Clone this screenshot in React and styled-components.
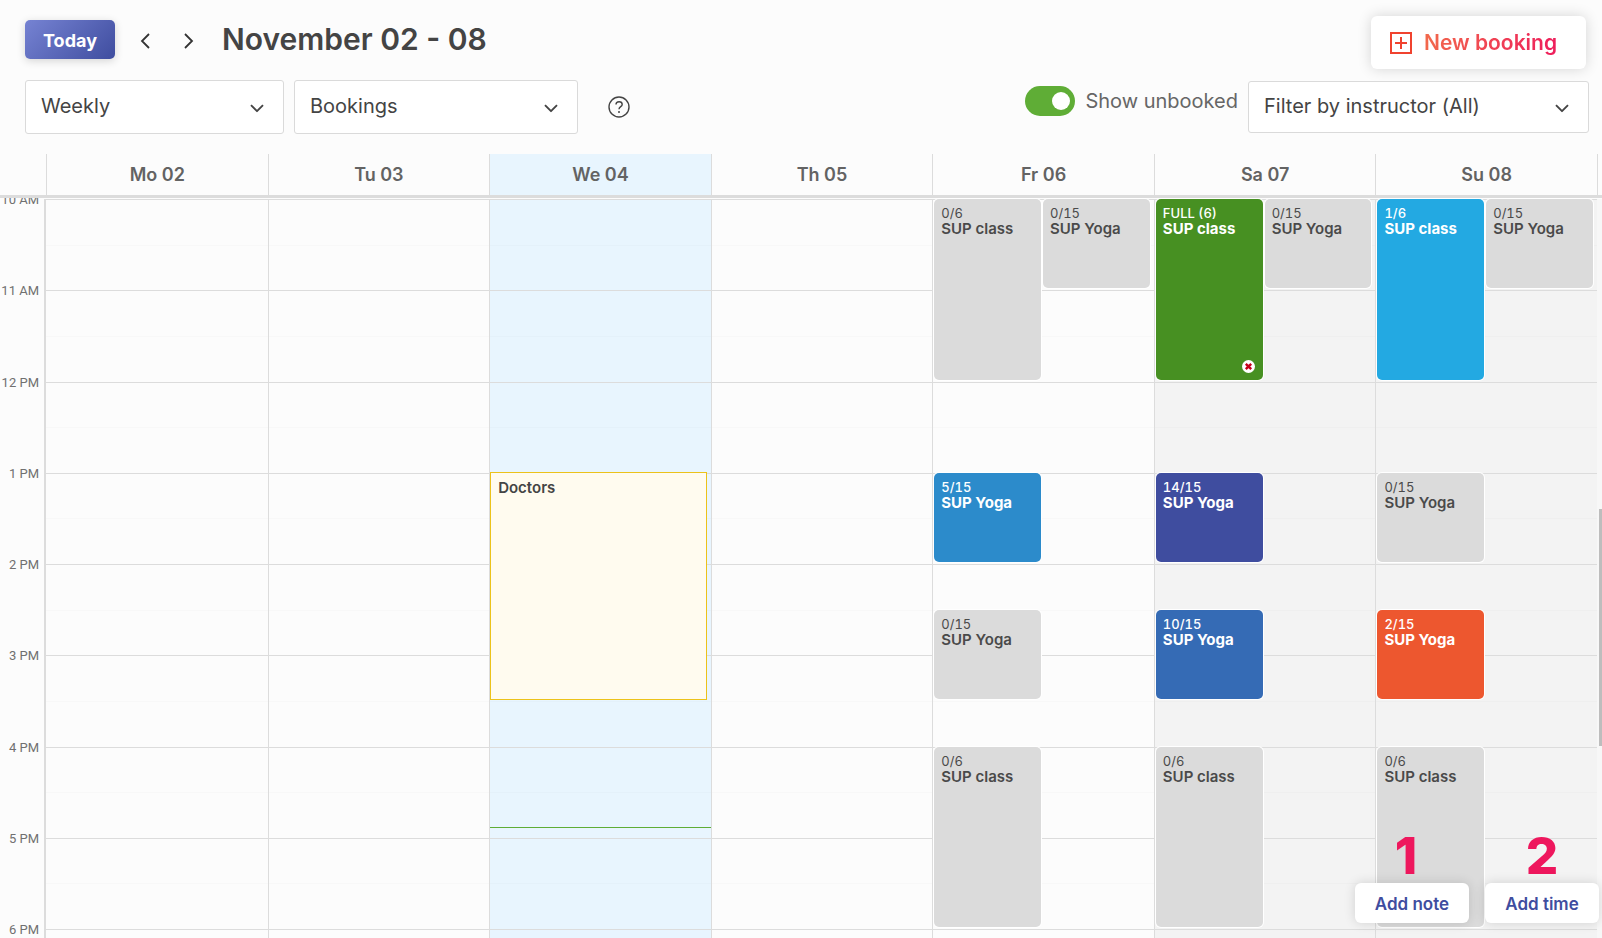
import React, { useState } from "react";
import styled, { createGlobalStyle, css } from "styled-components";

const GlobalStyle = createGlobalStyle`
  *, *::before, *::after { box-sizing: border-box; }
  body {
    margin: 0;
    background: #fcfcfc;
    color: #444;
    font-family: Inter, "Liberation Sans", Arial, sans-serif;
  }
  button, select, input { font: inherit; color: inherit; }
`;

const Page = styled.div`
  position: relative;
  display: flex;
  flex-direction: column;
  height: 100vh;
  overflow: hidden;
`;

const Toolbar = styled.header`
  display: flex;
  justify-content: space-between;
  align-items: flex-start;
  padding: 16px 16px 0 25px;
`;

const DateNav = styled.nav`
  display: flex;
  align-items: center;
  padding-top: 4px;
`;

const TodayButton = styled.button`
  width: 90px;
  height: 39px;
  margin-right: 19px;
  padding: 2px 0 0;
  border: 0;
  border-radius: 5px;
  background: linear-gradient(135deg, #7683d3, #3f4d9f);
  box-shadow: 0 2px 8px rgba(0, 0, 0, 0.16);
  color: #fff;
  font-size: 18px;
  font-weight: 700;
`;

const ArrowButton = styled.button`
  display: flex;
  justify-content: center;
  align-items: center;
  width: 22px;
  height: 32px;
  margin-right: 22px;
  padding: 2px 0 0;
  border: 0;
  background: none;
`;

const Title = styled.h1`
  margin: 0;
  font-size: 30px;
  font-weight: 600;
  line-height: 39px;
`;

const NewBookingButton = styled.button`
  display: flex;
  align-items: center;
  gap: 12px;
  width: 215px;
  height: 53px;
  padding: 0 0 0 19px;
  border: 0;
  border-radius: 6px;
  background: #fff;
  box-shadow: 0 0 14px rgba(0, 0, 0, 0.16);
  font-size: 21px;
  font-weight: 600;
`;

const GradientText = styled.span`
  background: linear-gradient(100deg, #f26a4b, #ee1d5c);
  background-clip: text;
  color: transparent;
`;

const Filters = styled.div`
  display: flex;
  align-items: center;
  gap: 10px;
  padding: 11px 13px 20px 25px;
`;

const SelectBox = styled.div`
  position: relative;
  width: ${(p) => p.$width}px;
`;

const Select = styled.select`
  display: block;
  width: 100%;
  height: ${(p) => p.$height || 54}px;
  padding: 0 40px 2px 15px;
  border: 1px solid #dadada;
  border-radius: 3px;
  background: #fff;
  appearance: none;
  font-size: 20px;
`;

const SelectArrow = styled.svg`
  position: absolute;
  right: 20px;
  top: 50%;
  margin-top: -3px;
  pointer-events: none;
`;

const HelpButton = styled.button`
  display: flex;
  margin-left: 20px;
  padding: 0;
  border: 0;
  background: none;
`;

const Toggle = styled.label`
  display: flex;
  align-items: center;
  align-self: flex-start;
  gap: 10px;
  margin-left: auto;
  padding-top: 6px;
  color: #666;
  font-size: 20px;
`;

const Switch = styled.input`
  display: flex;
  align-items: center;
  width: 50px;
  height: 30px;
  margin: 0;
  padding: 0 5px;
  border-radius: 15px;
  background: #bbb;
  appearance: none;

  &::before {
    content: "";
    width: 18px;
    height: 18px;
    border-radius: 50%;
    background: #fff;
  }
  &:checked {
    justify-content: flex-end;
    background: #5fad36;
  }
`;

const weekColumns = css`
  display: grid;
  grid-template-columns: 46px repeat(7, minmax(0, 1fr)) 5px;
`;

const WeekHeader = styled.div`
  ${weekColumns}
  flex: none;
  height: 44px;
  border-bottom: 3px solid #dcdcdc;
`;

const DayName = styled.div`
  border-left: 1px solid #dcdcdc;
  background: ${(p) => (p.$today ? "#e8f5fe" : "transparent")};
  color: #636363;
  font-size: 18px;
  font-weight: 600;
  line-height: 41px;
  text-align: center;
`;

const HeaderEnd = styled.div`
  border-left: 1px solid #dcdcdc;
`;

const WeekBody = styled.main`
  position: relative;
  flex: 1;
  min-height: 0;
  padding-top: 1px;
  overflow: hidden;
`;

const Week = styled.div`
  ${weekColumns}
  height: 1095px;
`;

const Hours = styled.div`
  display: grid;
  grid-template-rows: repeat(12, 1fr);
  border-right: 2px solid #dcdcdc;
  color: #707070;
  font-family: Roboto, "Liberation Sans", sans-serif;
  font-size: 13px;
`;

const Hour = styled.span`
  margin-top: -7px;
  padding-right: 5px;
  line-height: 16px;
  text-align: right;
  white-space: nowrap;
`;

const dayColors = { today: "#e8f5fe", weekend: "#f3f3f3", plain: "transparent" };

const Day = styled.section`
  position: relative;
  display: grid;
  grid-template-columns: 1px 1fr 2px 1fr 4px;
  grid-template-rows: repeat(24, minmax(0, 1fr));
  border-left: ${(p) => (p.$first ? 0 : 1)}px solid #dcdcdc;
  background: ${(p) => dayColors[p.$kind]};
`;

const Slot = styled.div`
  grid-column: 1 / -1;
  grid-row: ${(p) => p.$row};
  border-top: 1px solid ${(p) => (p.$row % 2 ? "#dcdcdc" : "rgba(0, 0, 0, 0.015)")};
`;

const Event = styled.article`
  position: relative;
  grid-column: ${(p) => (p.$second ? 4 : 2)};
  grid-row: ${(p) => p.$row} / span ${(p) => p.$span};
  margin-bottom: 2px;
  padding: 7px;
  overflow: hidden;
  border-radius: 5px;
  background: ${(p) => p.$color || "#dbdbdb"};
  box-shadow: 0 0 0 1px #fff;
  color: ${(p) => (p.$color ? "#fff" : "#4a4a4a")};
  line-height: 15px;
  white-space: nowrap;
`;

const Count = styled.div`
  font-size: 13px;
  font-variant-numeric: tabular-nums;
  font-weight: ${(p) => (p.$strong ? 500 : 400)};
`;

const Name = styled.div`
  font-size: 15px;
  font-weight: ${(p) => (p.$strong ? 700 : 600)};
`;

const Note = styled.article`
  grid-column: 1 / 5;
  grid-row: ${(p) => p.$row} / span ${(p) => p.$span};
  margin: -1px 0 1px;
  padding: 7px;
  border: 1px solid #ecc21a;
  background: #fffbef;
  line-height: 15px;
`;

const FullBadge = styled.svg`
  position: absolute;
  right: 8px;
  bottom: 7px;
`;

const NowLine = styled.div`
  position: absolute;
  left: 0;
  right: 0;
  height: 1px;
  background: #5fad36;
`;

const Gutter = styled.div`
  background: #f7f7f7;
`;

const ScrollThumb = styled.div`
  position: absolute;
  top: 42%;
  right: 0;
  width: 3px;
  height: 32%;
  background: #bdbdbd;
`;

const Actions = styled.div`
  position: absolute;
  right: 3px;
  bottom: 15px;
  display: flex;
  gap: 16px;
`;

const Action = styled.div`
  display: flex;
  flex-direction: column;
  align-items: center;
  width: 114px;
`;

const Step = styled.strong`
  padding-right: ${(p) => p.$inset || 0}px;
  color: #ee175d;
  font-size: 51px;
  font-weight: 800;
  line-height: 55px;
`;

const ActionButton = styled.button`
  width: 100%;
  height: 40px;
  padding: 2px 0 0;
  border: 0;
  border-radius: 6px;
  background: #fff;
  box-shadow: 0 0 12px rgba(0, 0, 0, 0.14);
  color: #3f4d9f;
  font-size: 17px;
  font-weight: 600;
`;

const START_HOUR = 10;
const HOURS = 12;
const NOW = 16 + 53 / 60;

const hourLabels = ["10 AM", "11 AM", "12 PM", "1 PM", "2 PM", "3 PM", "4 PM", "5 PM", "6 PM", "7 PM", "8 PM", "9 PM"];

const sup = (at, hours, count, color, extra) => ({ at, hours, count, color, name: "SUP class", ...extra });
const yoga = (at, count, color, extra) => ({ at, hours: 1, count, color, name: "SUP Yoga", ...extra });

const days = [
  { name: "Mo 02", kind: "plain", events: [] },
  { name: "Tu 03", kind: "plain", events: [] },
  { name: "We 04", kind: "today", events: [{ at: 13, hours: 2.5, name: "Doctors", note: true }] },
  { name: "Th 05", kind: "plain", events: [] },
  {
    name: "Fr 06",
    kind: "plain",
    events: [
      sup(10, 2, "0/6"),
      yoga(10, "0/15", null, { second: true }),
      yoga(13, "5/15", "#2c8bcb"),
      yoga(14.5, "0/15"),
      sup(16, 2, "0/6"),
    ],
  },
  {
    name: "Sa 07",
    kind: "weekend",
    events: [
      sup(10, 2, "FULL (6)", "#479022", { full: true }),
      yoga(10, "0/15", null, { second: true }),
      yoga(13, "14/15", "#3f4d9f"),
      yoga(14.5, "10/15", "#356bb5"),
      sup(16, 2, "0/6"),
    ],
  },
  {
    name: "Su 08",
    kind: "weekend",
    events: [
      sup(10, 2, "1/6", "#23a9e2"),
      yoga(10, "0/15", null, { second: true }),
      yoga(13, "0/15"),
      yoga(14.5, "2/15", "#ed572f"),
      sup(16, 2, "0/6"),
    ],
  },
];

function Arrow({ left }) {
  return (
    <svg width="10" height="16" viewBox="0 0 10 16" fill="none" stroke="#333" strokeWidth="1.8" aria-hidden="true">
      <path d={left ? "M9 1L2 8l7 7" : "M1 1l7 7-7 7"} />
    </svg>
  );
}

function Dropdown({ label, value, width, height }) {
  return (
    <SelectBox $width={width}>
      <Select aria-label={label} $height={height} defaultValue={value}>
        <option>{value}</option>
      </Select>
      <SelectArrow width="14" height="9" viewBox="0 0 14 9" fill="none" stroke="#444" strokeWidth="1.9" aria-hidden="true">
        <path d="M1 1.200l6 6 6-6" strokeLinejoin="round" />
      </SelectArrow>
    </SelectBox>
  );
}

function CalendarEvent({ event }) {
  const row = (event.at - START_HOUR) * 2 + 1;
  const span = event.hours * 2;
  if (event.note) {
    return (
      <Note $row={row} $span={span}>
        <Name>{event.name}</Name>
      </Note>
    );
  }
  const strong = Boolean(event.color);
  return (
    <Event $row={row} $span={span} $second={event.second} $color={event.color}>
      <Count $strong={strong}>{event.count}</Count>
      <Name $strong={strong}>{event.name}</Name>
      {event.full && (
        <FullBadge width="13" height="13" viewBox="0 0 13 13" aria-hidden="true">
          <circle cx="6.5" cy="6.5" r="6.5" fill="#fff" />
          <path d="M3.800 3.800l5.400 5.400M9.200 3.800l-5.400 5.400" stroke="#c4001a" strokeWidth="2.4" />
        </FullBadge>
      )}
    </Event>
  );
}

export default function App() {
  const [showUnbooked, setShowUnbooked] = useState(true);
  const nowTop = `${((NOW - START_HOUR) / HOURS) * 100}%`;

  return (
    <Page>
      <GlobalStyle />
      <Toolbar>
        <DateNav>
          <TodayButton>Today</TodayButton>
          <ArrowButton aria-label="Previous week"><Arrow left /></ArrowButton>
          <ArrowButton aria-label="Next week"><Arrow /></ArrowButton>
          <Title>November 02 - 08</Title>
        </DateNav>
        <NewBookingButton>
          <svg width="22" height="22" viewBox="0 0 22 22" fill="none" stroke="#f0432f" strokeWidth="2" aria-hidden="true">
            <path d="M1 1h20v20H1zM11 5v12M5 11h12" />
          </svg>
          <GradientText>New booking</GradientText>
        </NewBookingButton>
      </Toolbar>

      <Filters>
        <Dropdown label="Period" value="Weekly" width={259} />
        <Dropdown label="View" value="Bookings" width={284} />
        <HelpButton aria-label="Help">
          <svg width="22" height="22" viewBox="0 0 22 22" fill="none" stroke="#444" strokeWidth="1.4" aria-hidden="true">
            <circle cx="11" cy="11" r="10" />
            <path d="M8 8.600c0-3.900 6.200-3.700 6.200-.2 0 2.200-3.200 2.300-3.200 4.900" />
            <circle cx="11" cy="15.900" r="1" fill="#444" stroke="none" />
          </svg>
        </HelpButton>
        <Toggle>
          <Switch type="checkbox" checked={showUnbooked} onChange={(e) => setShowUnbooked(e.target.checked)} />
          Show unbooked
        </Toggle>
        <Dropdown label="Instructor" value="Filter by instructor (All)" width={341} height={52} />
      </Filters>

      <WeekHeader>
        <span />
        {days.map((day) => (
          <DayName key={day.name} $today={day.kind === "today"}>{day.name}</DayName>
        ))}
        <HeaderEnd />
      </WeekHeader>

      <WeekBody>
        <Week>
          <Hours>
            {hourLabels.map((label) => <Hour key={label}>{label}</Hour>)}
          </Hours>
          {days.map((day, i) => (
            <Day key={day.name} $kind={day.kind} $first={i === 0}>
              {Array.from({ length: HOURS * 2 }, (_, n) => <Slot key={n} $row={n + 1} />)}
              {day.events
                .filter((event) => showUnbooked || !/^0\//.test(event.count))
                .map((event) => <CalendarEvent key={`${event.at}-${event.name}`} event={event} />)}
              {day.kind === "today" && <NowLine style={{ top: nowTop }} />}
            </Day>
          ))}
          <Gutter />
        </Week>
        <ScrollThumb />
      </WeekBody>

      <Actions>
        <Action>
          <Step $inset={12}>1</Step>
          <ActionButton>Add note</ActionButton>
        </Action>
        <Action>
          <Step>2</Step>
          <ActionButton>Add time</ActionButton>
        </Action>
      </Actions>
    </Page>
  );
}
